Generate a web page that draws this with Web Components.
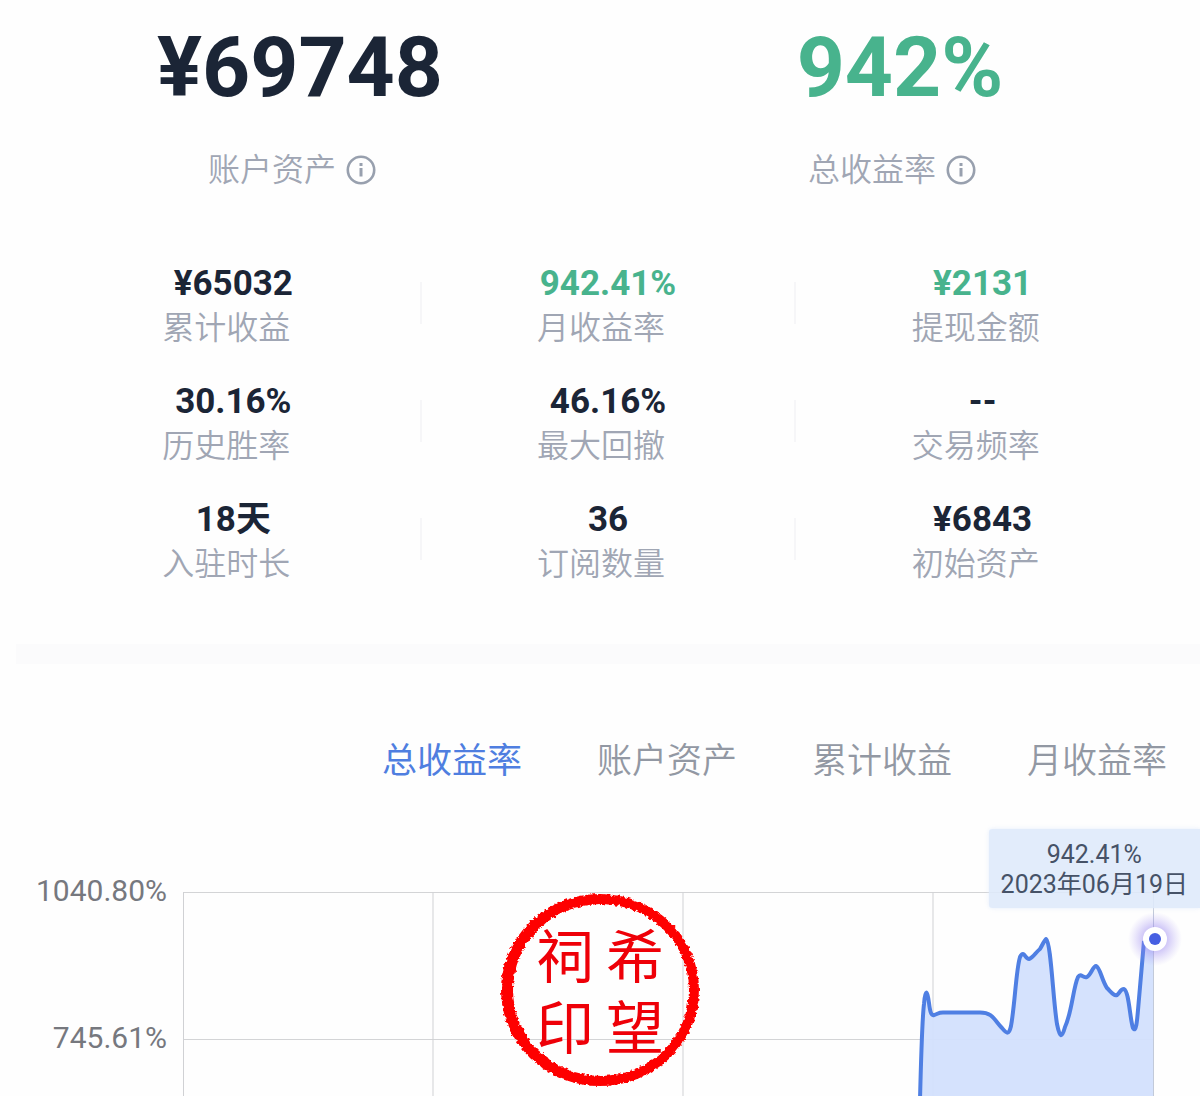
<!DOCTYPE html>
<html lang="zh-CN">
<head>
<meta charset="utf-8">
<meta name="viewport" content="width=device-width, initial-scale=1">
<title>账户收益</title>
<style>
  body {
    margin: 0;
    background: #fefefe;
    color: #1b2536;
    font-family: Roboto, "Noto Sans CJK SC", sans-serif;
    --muted: #a0a6b4;
    --gain: #48b38d;
    --accent: #4f7ee0;
  }
</style>
</head>
<body>
<account-overview></account-overview>

<script>
const define = (name, html, setup) => {
  const template = document.createElement('template');
  template.innerHTML = html;
  customElements.define(name, class extends HTMLElement {
    constructor() {
      super();
      this.attachShadow({ mode: 'open' }).append(template.content.cloneNode(true));
      if (setup) setup(this.shadowRoot, this);
    }
  });
};

define('info-button', `
  <style>
    :host { display: block; }
    button { display: block; padding: 0; border: 0; background: none; color: #98a0ae; }
    svg { display: block; width: 30px; height: 30px; }
  </style>
  <button type="button" aria-label="说明">
    <svg viewBox="0 0 30 30" fill="none" stroke="currentColor" stroke-width="2.6">
      <circle cx="15" cy="15" r="13.2"/>
      <path d="M15 13v8.5" stroke-width="3"/>
      <path d="M15 8v3" stroke-width="3"/>
    </svg>
  </button>`);

define('headline-figure', `
  <style>
    :host { display: flex; flex-direction: column; align-items: center; gap: 34px; }
    .value { font-size: 84px; line-height: 96px; font-weight: 700; }
    .caption { display: flex; align-items: center; gap: 10px; margin-right: 16px;
      font-size: 32px; line-height: 40px; font-weight: 350; color: var(--muted); }
    :host([gain]) .value { color: var(--gain); }
  </style>
  <div class="value"><slot></slot></div>
  <div class="caption"><slot name="caption"></slot><info-button></info-button></div>`);

define('stat-cell', `
  <style>
    :host { display: flex; justify-content: center; position: relative; text-align: center; }
    dl { margin: 0; }
    dt { padding-right: 14px; font-size: 32px; line-height: 44px; font-weight: 350; color: var(--muted); }
    dd { margin: 0; font-size: 35px; line-height: 44px; font-weight: 700; }
    dl { display: flex; flex-direction: column-reverse; }
    :host([gain]) dd { color: var(--gain); }
    :host([divided])::after { content: ""; position: absolute; right: -1px; top: 20px;
      width: 2px; height: 42px; background: #f6f6f8; }
  </style>
  <dl><dt><slot name="label"></slot></dt><dd><slot></slot></dd></dl>`);

define('metric-tabs', `
  <style>
    :host { display: flex; justify-content: flex-end; gap: 75px; padding-right: 33px; }
    button { padding: 0; border: 0; background: none; font: inherit; font-size: 35px;
      line-height: 50px; font-weight: 350; color: #9298a3; }
    button[aria-selected="true"] { color: var(--accent); font-weight: 400; }
  </style>
  <button type="button" role="tab" aria-selected="true">总收益率</button>
  <button type="button" role="tab" aria-selected="false">账户资产</button>
  <button type="button" role="tab" aria-selected="false">累计收益</button>
  <button type="button" role="tab" aria-selected="false">月收益率</button>`,
  root => {
    const tabs = [...root.querySelectorAll('button')];
    tabs.forEach(tab => tab.addEventListener('click', () =>
      tabs.forEach(t => t.setAttribute('aria-selected', String(t === tab)))));
  });

define('seal-stamp', `
  <style>
    :host { display: grid; width: 200px; height: 196px; color: #ee0008; }
    svg, .text { grid-area: 1 / 1; }
    svg { width: 200px; height: 196px; overflow: visible; }
    .text { place-self: center; display: grid; grid-template-columns: 70px 70px;
      grid-auto-rows: 71px; place-items: center; padding-top: 8px; font-size: 58px; line-height: 71px; }
  </style>
  <svg viewBox="0 0 200 196" aria-hidden="true">
    <defs>
      <filter id="rough" x="-5%" y="-5%" width="110%" height="110%">
        <feTurbulence type="fractalNoise" baseFrequency="0.28" numOctaves="3" seed="8" result="grain"/>
        <feDisplacementMap in="SourceGraphic" in2="grain" scale="5" xChannelSelector="R" yChannelSelector="G"/>
      </filter>
    </defs>
    <path fill="#fe0000" fill-rule="evenodd" filter="url(#rough)"
      d="M100 2A99 96 0 0 1 100 194A99 96 0 0 1 100 2ZM101 12A88 86 0 0 0 101 184A88 86 0 0 0 101 12Z"/>
  </svg>
  <div class="text"><span>祠</span><span>希</span><span>印</span><span>望</span></div>`);

define('chart-tooltip', `
  <style>
    :host { display: block; padding: 11px 12px 8px; border-radius: 3px 0 0 3px;
      background: rgba(222, 233, 251, .88); box-shadow: 0 0 4px rgba(222, 233, 251, .8);
      color: #465267; font-size: 25px; line-height: 30px; text-align: center; white-space: nowrap; }
  </style>
  <div><slot></slot></div>
  <div><slot name="date"></slot></div>`);

define('yield-chart', `
  <style>
    :host { display: flex; position: relative; padding-right: 46px; gap: 16px; }
    .scale { display: flex; flex-direction: column; gap: 107px; margin-top: -21px;
      width: 167px; text-align: right; font-size: 30px; line-height: 40px; color: #76787e; }
    .plot { flex: 1; min-width: 0; position: relative; }
    .plot svg.lines { display: block; width: 100%; height: 204px; }
    .lines * { vector-effect: non-scaling-stroke; }
    .marker { position: absolute; right: -28px; top: 20px; width: 54px; height: 54px; }
    chart-tooltip { position: absolute; right: 0; top: -63px; }
    seal-stamp { position: absolute; left: calc(50% - 100px); top: 0; }
  </style>
  <div class="scale"><span>1040.80%</span><span>745.61%</span></div>
  <div class="plot">
    <svg class="lines" viewBox="183 892 971 204" preserveAspectRatio="none" role="img" aria-label="总收益率走势">
      <path d="M183 892.5H1154M183 1039.5H1154" stroke="#d3d4d6" fill="none"/>
      <path d="M183.5 892V1096M433 892V1096M683 892V1096M933 892V1096M1153.5 892V1096" stroke="#d0d1d4" fill="none"/>
      <path id="area" fill="#d2e0fd" fill-opacity=".94"/>
      <path d="M1153.5 892V1096" stroke="#c2cad9" fill="none"/>
      <path id="curve" fill="none" stroke="#4f7fe3" stroke-width="4" stroke-linejoin="round"/>
    </svg>
    <svg class="marker" viewBox="0 0 54 54" aria-hidden="true">
      <defs><radialGradient id="glow">
        <stop offset=".35" stop-color="#8d78ee" stop-opacity=".5"/>
        <stop offset="1" stop-color="#a899f2" stop-opacity="0"/>
      </radialGradient></defs>
      <circle cx="27" cy="27" r="27" fill="url(#glow)"/>
      <circle cx="27" cy="27" r="12" fill="#fff"/>
      <circle cx="27" cy="27" r="6" fill="#465fe2"/>
    </svg>
  </div>
  <seal-stamp></seal-stamp>
  <chart-tooltip>942.41%<span slot="date">2023年06月19日</span></chart-tooltip>`,
  root => {
    const curve = 'M920 1100C921 1060 922 1020 924 1004C925 989 927 989 929 1003' +
      'C930 1011 931 1016 934 1015C938 1014 938 1012.5 943 1012.5H980' +
      'C993 1012.5 994 1020 1002 1028C1007 1034 1009 1035 1011 1026' +
      'C1015 1004 1016 970 1020 957C1024 949 1025 959 1029 959' +
      'C1033 958 1036 952 1040 949C1043 944 1045 939 1046 939C1051 942 1053 1000 1057 1024' +
      'C1060 1039 1062 1038 1065 1027C1072 1012 1073 988 1078 977' +
      'C1081 972 1083 979 1087 977C1091 975 1093 966 1096 966C1100 967 1102 981 1107 988' +
      'C1112 993 1114 996 1117 995C1120 993 1120 989 1124 989C1129 991 1130 1020 1133 1028' +
      'C1136 1033 1137 1022 1138 1010L1144 941';
    root.getElementById('curve').setAttribute('d', curve);
    root.getElementById('area').setAttribute('d', curve + 'L1153 939V1100Z');
  });

define('account-overview', `
  <style>
    :host { display: flow-root; }
    .headline { display: grid; grid-template-columns: 1fr 1fr; padding-top: 20px; }
    .stats { display: grid; grid-template-columns: repeat(3, 1fr); row-gap: 30px;
      padding: 72px 30px 0 46px; }
    .band { height: 20px; margin: 58px 0 0 16px; background: #fbfbfc; }
    metric-tabs { margin-top: 73px; }
    yield-chart { margin-top: 105px; }
  </style>
  <main>
    <section class="headline">
      <headline-figure>¥69748<span slot="caption">账户资产</span></headline-figure>
      <headline-figure gain>942%<span slot="caption">总收益率</span></headline-figure>
    </section>
    <section class="stats">
      <stat-cell divided>¥65032<span slot="label">累计收益</span></stat-cell>
      <stat-cell divided gain>942.41%<span slot="label">月收益率</span></stat-cell>
      <stat-cell gain>¥2131<span slot="label">提现金额</span></stat-cell>
      <stat-cell divided>30.16%<span slot="label">历史胜率</span></stat-cell>
      <stat-cell divided>46.16%<span slot="label">最大回撤</span></stat-cell>
      <stat-cell>--<span slot="label">交易频率</span></stat-cell>
      <stat-cell divided>18天<span slot="label">入驻时长</span></stat-cell>
      <stat-cell divided>36<span slot="label">订阅数量</span></stat-cell>
      <stat-cell>¥6843<span slot="label">初始资产</span></stat-cell>
    </section>
    <div class="band"></div>
    <metric-tabs role="tablist"></metric-tabs>
    <yield-chart></yield-chart>
  </main>`);
</script>
</body>
</html>
